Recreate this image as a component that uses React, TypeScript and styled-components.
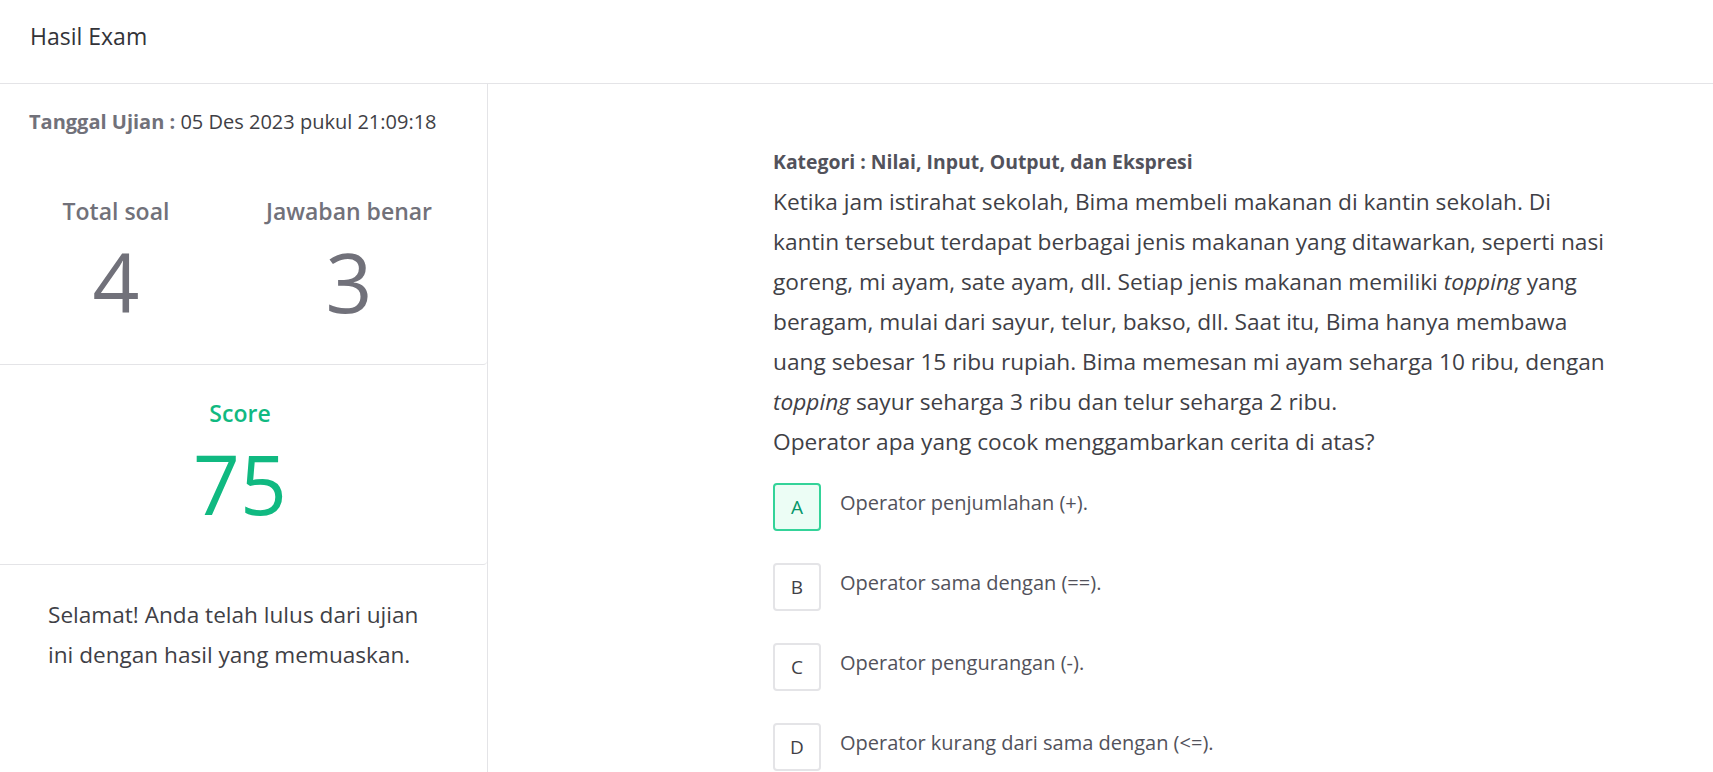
import React from 'react'
import styled, { createGlobalStyle } from 'styled-components'

const GlobalStyle = createGlobalStyle`
  html, body {
    margin: 0;
    padding: 0;
    background: #ffffff;
  }
  body {
    font-family: 'Open Sans', 'Noto Sans', sans-serif;
    color: #3f3f46;
  }
  * {
    box-sizing: border-box;
  }
`

const LINE = '#e4e4e7'
const GREEN = '#10b981'
const MUTED = '#71717a'

const Page = styled.div`
  min-height: 772px;
  display: flex;
  flex-direction: column;
`

const Header = styled.header`
  height: 84px;
  padding: 20px 30px 0;
  border-bottom: 1px solid ${LINE};
`

const Title = styled.h1`
  margin: 0;
  font-size: 23px;
  line-height: 32px;
  font-weight: 400;
  color: #333338;
`

const Body = styled.div`
  flex: 1;
  display: flex;
`

const Sidebar = styled.aside`
  width: 488px;
  flex-shrink: 0;
  border-right: 1px solid ${LINE};
  display: flex;
  flex-direction: column;
`

const Section = styled.section<{ $last?: boolean }>`
  border-bottom: ${({ $last }) => ($last ? 'none' : `1px solid ${LINE}`)};
  border-bottom-right-radius: 4px;
`

const DateLine = styled.p`
  margin: 0;
  padding: 26px 29px 0;
  font-size: 20px;
  line-height: 24px;
  color: #3f3f46;
  white-space: nowrap;

  strong {
    font-weight: 700;
    color: ${MUTED};
  }
`

const StatsGrid = styled.div`
  display: grid;
  grid-template-columns: 232px 234px;
  padding: 62px 0 42px;
`

const Stat = styled.div`
  display: flex;
  flex-direction: column;
  align-items: center;
  gap: 14px;
`

const StatLabel = styled.span<{ $green?: boolean }>`
  font-size: 23px;
  line-height: 30px;
  font-weight: 600;
  color: ${({ $green }) => ($green ? GREEN : MUTED)};
`

const StatValue = styled.span<{ $green?: boolean }>`
  font-size: 82px;
  line-height: 82px;
  font-weight: 400;
  color: ${({ $green }) => ($green ? GREEN : MUTED)};
`

const ScoreBox = styled(Stat)`
  width: 480px;
  padding: 33px 0 40px;
`

const Message = styled.p`
  margin: 0;
  padding: 30px 48px 0;
  font-size: 22.6px;
  line-height: 40px;
  color: #3f3f46;
`

const Content = styled.main`
  flex: 1;
  padding: 66px 100px 0 285px;
`

const Category = styled.div`
  font-size: 19.4px;
  line-height: 24px;
  font-weight: 700;
  color: #52525b;
  margin-bottom: 8px;
`

const Question = styled.div`
  font-size: 22.7px;
  line-height: 40px;
  color: #3f3f46;
  white-space: nowrap;
`

const QuestionLine = styled.span`
  display: block;
`

const Options = styled.ul`
  list-style: none;
  margin: 21px 0 0;
  padding: 0;
  display: flex;
  flex-direction: column;
  gap: 32px;
`

const OptionRow = styled.li`
  display: flex;
  align-items: flex-start;
  gap: 19px;
`

const OptionKey = styled.span<{ $correct?: boolean }>`
  width: 48px;
  height: 48px;
  flex-shrink: 0;
  display: flex;
  align-items: center;
  justify-content: center;
  border-radius: 4px;
  border: 2px solid ${({ $correct }) => ($correct ? '#34d399' : LINE)};
  background: ${({ $correct }) => ($correct ? '#ecfdf5' : '#ffffff')};
  color: ${({ $correct }) => ($correct ? '#059669' : '#3f3f46')};
  font-size: 19px;
`

const OptionText = styled.span`
  padding-top: 8px;
  font-size: 20px;
  line-height: 24px;
  color: #52525b;
`

const questionLines: React.ReactNode[] = [
  'Ketika jam istirahat sekolah, Bima membeli makanan di kantin sekolah. Di',
  'kantin tersebut terdapat berbagai jenis makanan yang ditawarkan, seperti nasi',
  <>
    goreng, mi ayam, sate ayam, dll. Setiap jenis makanan memiliki <em>topping</em> yang
  </>,
  'beragam, mulai dari sayur, telur, bakso, dll. Saat itu, Bima hanya membawa',
  'uang sebesar 15 ribu rupiah. Bima memesan mi ayam seharga 10 ribu, dengan',
  <>
    <em>topping</em> sayur seharga 3 ribu dan telur seharga 2 ribu.
  </>,
  'Operator apa yang cocok menggambarkan cerita di atas?',
]

const options = [
  { key: 'A', text: 'Operator penjumlahan (+).', correct: true },
  { key: 'B', text: 'Operator sama dengan (==).' },
  { key: 'C', text: 'Operator pengurangan (-).' },
  { key: 'D', text: 'Operator kurang dari sama dengan (<=).' },
]

export default function App() {
  return (
    <Page>
      <GlobalStyle />
      <Header>
        <Title>Hasil Exam</Title>
      </Header>
      <Body>
        <Sidebar>
          <Section>
            <DateLine>
              <strong>Tanggal Ujian :</strong> 05 Des 2023 pukul 21:09:18
            </DateLine>
            <StatsGrid>
              <Stat>
                <StatLabel>Total soal</StatLabel>
                <StatValue>4</StatValue>
              </Stat>
              <Stat>
                <StatLabel>Jawaban benar</StatLabel>
                <StatValue>3</StatValue>
              </Stat>
            </StatsGrid>
          </Section>
          <Section>
            <ScoreBox>
              <StatLabel $green>Score</StatLabel>
              <StatValue $green>75</StatValue>
            </ScoreBox>
          </Section>
          <Section $last>
            <Message>Selamat! Anda telah lulus dari ujian ini dengan hasil yang memuaskan.</Message>
          </Section>
        </Sidebar>
        <Content>
          <Category>Kategori : Nilai, Input, Output, dan Ekspresi</Category>
          <Question>
            {questionLines.map((line, i) => (
              <QuestionLine key={i}>{line}</QuestionLine>
            ))}
          </Question>
          <Options>
            {options.map((o) => (
              <OptionRow key={o.key}>
                <OptionKey $correct={o.correct}>{o.key}</OptionKey>
                <OptionText>{o.text}</OptionText>
              </OptionRow>
            ))}
          </Options>
        </Content>
      </Body>
    </Page>
  )
}
